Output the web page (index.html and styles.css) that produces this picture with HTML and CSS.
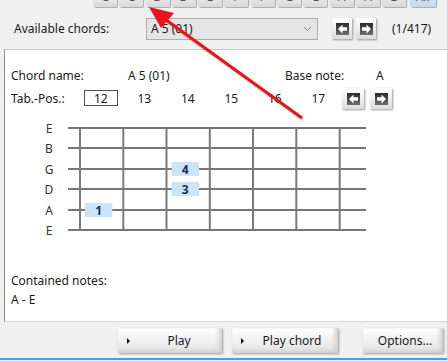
FILE: index.html
```html
<!DOCTYPE html>
<html lang="en">
<head>
  <meta charset="UTF-8">
  <title>Chord Finder</title>
  <link rel="stylesheet" href="styles.css">
</head>
<body>
  <!-- Base note buttons (cut at the top) -->
  <div class="note-strip">
    <span class="strip-label">Base note:</span>
    <div class="note-buttons">
      <button>C</button><button>C</button><button>D</button><button>D</button><button>E</button>
      <button>F</button><button>F</button><button>G</button><button>G</button><button>A</button>
      <button>A</button><button>B</button><button class="all">All</button>
    </div>
  </div>

  <!-- Chord selection -->
  <div class="chords-row">
    <span class="chords-label">Available chords:</span>
    <div class="combo">
      <span>A 5 (01)</span>
      <svg class="chevron" width="9" height="6" viewBox="0 0 9 6"><path d="M1 1 L4.5 4.5 L8 1" fill="none" stroke="#888" stroke-width="1"/></svg>
    </div>
    <button class="nav-btn">
      <svg width="13" height="12" viewBox="0 0 13 12"><rect width="13" height="12" fill="url(#iconGrad)"/><path d="M2 6 L6.5 1.5 L6.5 4.3 L11 4.3 L11 7.7 L6.5 7.7 L6.5 10.5 Z" fill="#fff"/></svg>
    </button>
    <button class="nav-btn">
      <svg width="13" height="12" viewBox="0 0 13 12"><rect width="13" height="12" fill="url(#iconGrad)"/><path d="M11 6 L6.5 1.5 L6.5 4.3 L2 4.3 L2 7.7 L6.5 7.7 L6.5 10.5 Z" fill="#fff"/></svg>
    </button>
    <span class="count">(1/417)</span>
  </div>

  <!-- Chord panel -->
  <div class="panel">
    <div class="info-row">
      <span class="info-label">Chord name:</span>
      <span class="info-value">A 5 (01)</span>
      <span class="info-label base">Base note:</span>
      <span class="info-value last">A</span>
    </div>
    <div class="tab-row">
      <span class="tab-label">Tab.-Pos.:</span>
      <span class="pos"><span class="pos-box">12</span></span>
      <span class="pos">13</span>
      <span class="pos">14</span>
      <span class="pos">15</span>
      <span class="pos">16</span>
      <span class="pos">17</span>
      <button class="nav-btn small">
        <svg width="13" height="12" viewBox="0 0 13 12"><rect width="13" height="12" fill="url(#iconGrad)"/><path d="M2 6 L6.5 1.5 L6.5 4.3 L11 4.3 L11 7.7 L6.5 7.7 L6.5 10.5 Z" fill="#fff"/></svg>
      </button>
      <button class="nav-btn small">
        <svg width="13" height="12" viewBox="0 0 13 12"><rect width="13" height="12" fill="url(#iconGrad)"/><path d="M11 6 L6.5 1.5 L6.5 4.3 L2 4.3 L2 7.7 L6.5 7.7 L6.5 10.5 Z" fill="#fff"/></svg>
      </button>
    </div>

    <svg class="fretboard" width="442" height="124" viewBox="0 0 442 124">
      <g class="strings">
        <line x1="63" y1="15" x2="361" y2="15"/>
        <line x1="63" y1="35" x2="361" y2="35"/>
        <line x1="63" y1="56" x2="361" y2="56"/>
        <line x1="63" y1="76" x2="361" y2="76"/>
        <line x1="63" y1="97" x2="361" y2="97"/>
        <line x1="63" y1="117" x2="361" y2="117"/>
      </g>
      <g class="frets">
        <line x1="75" y1="14" x2="75" y2="118"/>
        <line x1="118.3" y1="14" x2="118.3" y2="118"/>
        <line x1="161.5" y1="14" x2="161.5" y2="118"/>
        <line x1="204.8" y1="14" x2="204.8" y2="118"/>
        <line x1="248" y1="14" x2="248" y2="118"/>
        <line x1="291.3" y1="14" x2="291.3" y2="118"/>
        <line x1="334.7" y1="14" x2="334.7" y2="118"/>
      </g>
      <g class="string-names">
        <text x="44" y="15">E</text>
        <text x="44" y="35">B</text>
        <text x="44" y="56">G</text>
        <text x="44" y="76">D</text>
        <text x="44" y="97">A</text>
        <text x="44" y="117">E</text>
      </g>
      <g class="fingers">
        <rect x="166.7" y="49" width="27.3" height="14"/>
        <text x="180.3" y="56">4</text>
        <rect x="166.7" y="69" width="27.3" height="14"/>
        <text x="180.3" y="76">3</text>
        <rect x="80" y="90" width="27.3" height="14"/>
        <text x="93.6" y="97">1</text>
      </g>
    </svg>

    <div class="notes">
      <div>Contained notes:</div>
      <div>A - E</div>
    </div>
  </div>

  <!-- Actions -->
  <div class="actions">
    <button class="act play"><span class="tri"></span>Play</button>
    <button class="act chord"><span class="tri"></span>Play chord</button>
    <button class="act options">Options...</button>
  </div>
  <div class="status-line"></div>

  <!-- Red annotation arrow -->
  <svg class="arrow" width="447" height="361" viewBox="0 0 447 361">
    <defs>
      <linearGradient id="iconGrad" x1="0" y1="0" x2="0" y2="1">
        <stop offset="0" stop-color="#2a2a2a"/>
        <stop offset="1" stop-color="#6e6e6e"/>
      </linearGradient>
    </defs>
    <line x1="302" y1="118" x2="162" y2="17" stroke="rgba(0,0,0,0.15)" stroke-width="3" transform="translate(1,2)"/>
    <line x1="302" y1="118" x2="162" y2="17" stroke="#e8141a" stroke-width="3"/>
    <polygon points="149,7 174,13 161,28" fill="#e8141a"/>
  </svg>
</body>
</html>
```

FILE: styles.css
```css
body {
  margin: 0;
  width: 447px;
  height: 361px;
  overflow: hidden;
  position: relative;
  background-color: #f0f0f0;
  color: #1a1a1a;
  font-family: 'Noto Sans', 'Open Sans', sans-serif;
  font-size: 12px;
}
button {
  font-family: inherit;
  font-size: 12px;
  color: #1a1a1a;
}
/* Base note strip */
.note-strip {
  height: 8px;
  overflow: hidden;
  display: flex;
  align-items: flex-end;
}
.strip-label {
  padding-left: 14px;
  width: 79px;
  line-height: 16px;
  margin-bottom: 4px;
  flex-shrink: 0;
}
.note-buttons {
  display: flex;
  gap: 2.3px;
}
.note-buttons button {
  width: 24px;
  height: 22px;
  margin-bottom: 1px;
  border: none;
  border-radius: 2px;
  background: linear-gradient(#ffffff, #d8d8d8);
  box-shadow: 1px 1px 1px #a8a8a8;
  color: #555;
  padding: 0;
}
.note-buttons button.all {
  margin-left: 1px;
  width: 26px;
  background: linear-gradient(#e6eef8, #c6d8ec);
}
/* Chord selection row */
.chords-row {
  height: 41px;
  display: flex;
  align-items: center;
}
.chords-label {
  padding-left: 14px;
  width: 132px;
  flex-shrink: 0;
}
.combo {
  border: 1px solid #adadad;
  background-color: #e5e5e5;
  display: flex;
  align-items: center;
  justify-content: space-between;
  padding: 0 5px 0 4px;
  box-sizing: border-box;
  width: 172px;
  height: 22px;
  flex-shrink: 0;
}
.nav-btn {
  width: 20px;
  height: 21px;
  padding: 0;
  border: none;
  background: linear-gradient(#ffffff, #dcdcdc);
  box-shadow: 1px 1px 2px #9a9a9a;
  display: flex;
  align-items: center;
  justify-content: center;
  margin-left: 4px;
  flex-shrink: 0;
}
.nav-btn svg {
  display: block;
}
.chords-row .nav-btn:first-of-type {
  margin-left: 14px;
}
.count {
  margin-left: 16px;
}
/* Panel */
.panel {
  margin-left: 4px;
  height: 273px;
  background-color: #ffffff;
  border-left: 1px solid #8c8c8c;
  border-top: 1px solid #c8c8c8;
  border-bottom: 1px solid #d8d8d8;
  box-sizing: border-box;
  padding-top: 17px;
}
.info-row {
  display: flex;
  align-items: center;
  height: 16px;
  padding-left: 6px;
}
.info-row span {
  flex-shrink: 0;
}
.info-label {
  width: 117px;
}
.info-value {
  width: 157px;
}
.info-label.base {
  width: 91px;
}
.info-value.last {
  width: auto;
}
.tab-row {
  display: flex;
  align-items: center;
  height: 21px;
  margin-top: 5px;
  padding-left: 6px;
}
.tab-label {
  width: 68px;
  flex-shrink: 0;
}
.pos {
  width: 43.5px;
  text-align: center;
  flex-shrink: 0;
}
.pos-box {
  display: inline-block;
  width: 34px;
  height: 16px;
  line-height: 15px;
  border: 1px solid #505050;
  box-sizing: border-box;
}
.tab-row .nav-btn.small {
  width: 22px;
  margin-left: 6px;
}
.tab-row .nav-btn.small:first-of-type {
  margin-left: 2px;
}
/* Fretboard */
.fretboard {
  display: block;
  margin-top: 4px;
}
.strings line {
  stroke: #767676;
  stroke-width: 2;
}
.frets line {
  stroke: #7a7a7a;
  stroke-width: 2;
}
.string-names text {
  font-size: 12px;
  fill: #333333;
  text-anchor: middle;
  dominant-baseline: central;
}
.fingers rect {
  fill: #cce4f7;
}
.fingers text {
  font-size: 12px;
  font-weight: bold;
  fill: #1c2d5e;
  text-anchor: middle;
  dominant-baseline: central;
}
.notes {
  margin-top: 34px;
  padding-left: 6px;
  line-height: 19px;
}
/* Actions */
.actions {
  height: 36px;
  display: flex;
  align-items: center;
  padding-left: 118px;
}
.act {
  height: 25px;
  border: none;
  background: linear-gradient(#ffffff, #e2e2e2);
  box-shadow: 1px 1px 2px #9c9c9c, inset -3px -2px 4px #cfcfcf;
  position: relative;
  padding: 0;
}
.act.play {
  width: 104px;
  padding-left: 18px;
}
.act.chord {
  width: 106px;
  margin-left: 10px;
  padding-left: 14px;
}
.act.options {
  width: 80px;
  margin-left: 25px;
  padding-left: 4px;
}
.tri {
  position: absolute;
  left: 9px;
  top: 10px;
  border-left: 3px solid #111;
  border-top: 3px solid transparent;
  border-bottom: 3px solid transparent;
}
.status-line {
  height: 2px;
  background-color: #46a0e6;
}
/* Annotation overlay */
.arrow {
  position: absolute;
  left: 0;
  top: 0;
  pointer-events: none;
}
```
